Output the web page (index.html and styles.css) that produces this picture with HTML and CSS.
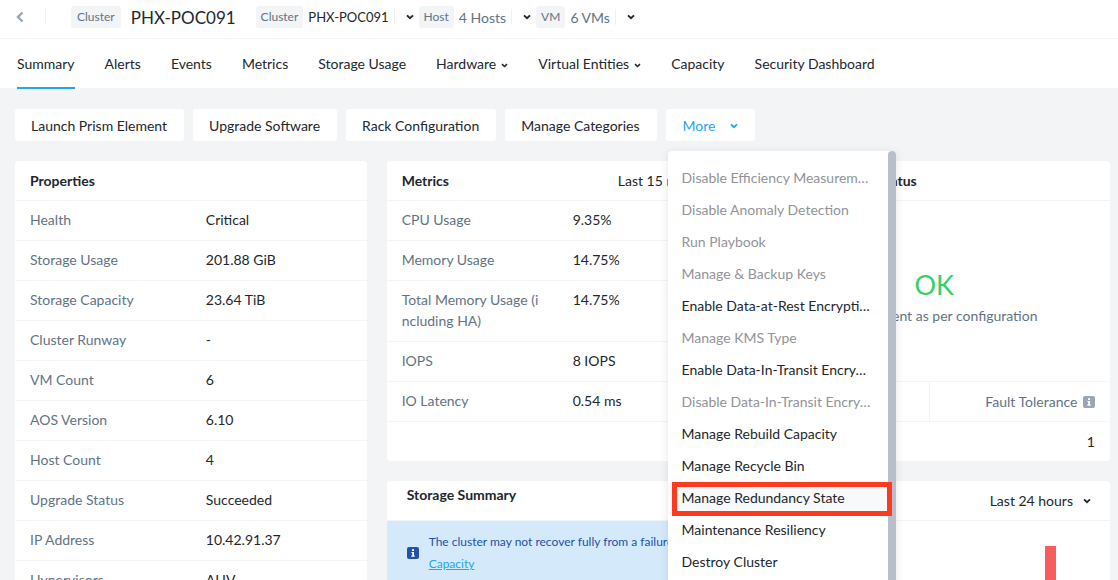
FILE: index.html
```html
<!DOCTYPE html>
<html lang="en">
<head>
<meta charset="utf-8">
<title>PHX-POC091 - Summary</title>
<link rel="stylesheet" href="styles.css">
</head>
<body>
<svg class="sprite" aria-hidden="true">
  <symbol id="caret" viewBox="0 0 8 6"><path d="M1 1.4 4 4.2 7 1.4" fill="none" stroke="currentColor" stroke-width="1.9"/></symbol>
  <symbol id="info" viewBox="0 0 12 12"><rect width="12" height="12" rx="2" fill="currentColor"/><path d="M5 2.2h2v1.7H5zM4.4 4.9H7v3.7h.7v1.1H4.3V8.600h.9V6h-.8z" fill="#fff"/></symbol>
</svg>

<header class="topbar">
  <button class="back" aria-label="Back"><svg width="8" height="12" viewBox="0 0 8 12"><path d="M6.500 1.500 2 6l4.500 4.500" fill="none" stroke="currentColor" stroke-width="2.400"/></svg></button>
  <span class="rule"></span>
  <div class="current"><span class="chip chip-wide">Cluster</span><h1>PHX-POC091</h1></div>
  <div class="crumb"><span class="chip">Cluster</span><span class="name">PHX-POC091</span><span class="rule"></span><button class="open" aria-label="Clusters"><svg class="caret"><use href="#caret"/></svg></button></div>
  <div class="crumb muted"><span class="chip">Host</span><span class="name">4 Hosts</span><span class="rule"></span><button class="open" aria-label="Hosts"><svg class="caret"><use href="#caret"/></svg></button></div>
  <div class="crumb muted"><span class="chip">VM</span><span class="name">6 VMs</span><span class="rule"></span><button class="open" aria-label="VMs"><svg class="caret"><use href="#caret"/></svg></button></div>
</header>

<nav class="tabs">
  <a class="tab active" href="#">Summary</a>
  <a class="tab" href="#">Alerts</a>
  <a class="tab" href="#">Events</a>
  <a class="tab" href="#">Metrics</a>
  <a class="tab" href="#">Storage Usage</a>
  <a class="tab" href="#">Hardware <svg class="caret small"><use href="#caret"/></svg></a>
  <a class="tab" href="#">Virtual Entities <svg class="caret small"><use href="#caret"/></svg></a>
  <a class="tab" href="#">Capacity</a>
  <a class="tab" href="#">Security Dashboard</a>
</nav>

<main class="content">
  <div class="actions">
    <button class="action">Launch Prism Element</button>
    <button class="action">Upgrade Software</button>
    <button class="action">Rack Configuration</button>
    <button class="action">Manage Categories</button>
    <div class="more">
      <button class="action action-more" aria-expanded="true">More <svg class="caret"><use href="#caret"/></svg></button>
      <div class="menu">
        <div class="menu-items">
          <button class="item" disabled>Disable Efficiency Measurem…</button>
          <button class="item" disabled>Disable Anomaly Detection</button>
          <button class="item" disabled>Run Playbook</button>
          <button class="item" disabled>Manage &amp; Backup Keys</button>
          <button class="item">Enable Data-at-Rest Encrypti…</button>
          <button class="item" disabled>Manage KMS Type</button>
          <button class="item">Enable Data-In-Transit Encry…</button>
          <button class="item" disabled>Disable Data-In-Transit Encry…</button>
          <button class="item">Manage Rebuild Capacity</button>
          <button class="item">Manage Recycle Bin</button>
          <button class="item marked">Manage Redundancy State</button>
          <button class="item">Maintenance Resiliency</button>
          <button class="item">Destroy Cluster</button>
        </div>
        <div class="menu-scroll"></div>
      </div>
    </div>
  </div>

  <div class="cards">
    <section class="card tall">
      <div class="card-head"><h2>Properties</h2></div>
      <table class="facts">
        <tr><th scope="row">Health</th><td>Critical</td></tr>
        <tr><th scope="row">Storage Usage</th><td>201.88 GiB</td></tr>
        <tr><th scope="row">Storage Capacity</th><td>23.64 TiB</td></tr>
        <tr><th scope="row">Cluster Runway</th><td>-</td></tr>
        <tr><th scope="row">VM Count</th><td>6</td></tr>
        <tr><th scope="row">AOS Version</th><td>6.10</td></tr>
        <tr><th scope="row">Host Count</th><td>4</td></tr>
        <tr><th scope="row">Upgrade Status</th><td>Succeeded</td></tr>
        <tr><th scope="row">IP Address</th><td>10.42.91.37</td></tr>
        <tr><th scope="row">Hypervisors</th><td>AHV</td></tr>
      </table>
    </section>

    <section class="card">
      <div class="card-head metrics-head"><h2>Metrics</h2><button class="range">Last 15 minutes</button></div>
      <table class="facts metrics">
        <tr><th scope="row">CPU Usage</th><td>9.35%</td></tr>
        <tr><th scope="row">Memory Usage</th><td>14.75%</td></tr>
        <tr><th scope="row">Total Memory Usage (including HA)</th><td>14.75%</td></tr>
        <tr><th scope="row">IOPS</th><td>8 IOPS</td></tr>
        <tr><th scope="row">IO Latency</th><td>0.54 ms</td></tr>
      </table>
    </section>

    <section class="card resiliency">
      <div class="card-head resiliency-head"><h2>Data Resiliency Status</h2></div>
      <div class="status"><div class="ok">OK</div><div class="note">Data resilient as per configuration</div></div>
      <table class="tolerance">
        <tr><th>Domain</th><th>Fault Tolerance <svg class="info"><use href="#info"/></svg></th></tr>
        <tr><td>Host</td><td>1</td></tr>
      </table>
    </section>

    <section class="card">
      <div class="card-head storage-head"><h2>Storage Summary</h2></div>
      <div class="notice">
        <svg class="info"><use href="#info"/></svg>
        <div class="notice-text">The cluster may not recover fully from a failure.<br><a href="#">Capacity</a></div>
      </div>
    </section>

    <section class="card">
      <div class="card-head alerts-head"><h2>Alerts</h2><button class="range">Last 24 hours <svg class="caret"><use href="#caret"/></svg></button></div>
      <div class="chart"><div class="bar"></div></div>
    </section>
  </div>
</main>
</body>
</html>
```
FILE: styles.css
```css
* { box-sizing: border-box; }
body {
  margin: 0;
  height: 100vh;
  overflow: hidden;
  background: #f2f4f6;
  color: #22272e;
  font: 14px/21px Lato, "Open Sans", sans-serif;
}
button {
  border: 0;
  padding: 0;
  background: none;
  color: inherit;
  font: inherit;
}
h1, h2 { margin: 0; }
.sprite { position: absolute; width: 0; height: 0; }
.caret { width: 8px; height: 6px; flex: none; }
.caret.small { width: 7px; height: 5px; margin: 3px 0 0 5px; }
.info { width: 12px; height: 12px; flex: none; }

.topbar {
  display: flex;
  align-items: center;
  height: 39px;
  padding: 0 16px 4px;
  background: #fff;
  border-bottom: 1px solid #f2f4f6;
}
.back { display: flex; width: 29px; color: #9aa5b5; }
.rule { width: 1px; height: 16px; background: #eef0f3; }
.current { display: flex; align-items: center; gap: 10px; margin: 0 20px 0 25px; }
h1 { font-size: 17px; font-weight: 400; }
.chip {
  padding: 0 5px;
  border-radius: 3px;
  background: #f2f4f6;
  color: #627386;
  font-size: 12px;
  line-height: 22px;
}
.chip-wide { padding: 0 6px; }
.crumb { display: flex; align-items: center; gap: 5px; margin-right: 5px; }
.name { font-size: 13px; }
.muted .name { color: #627386; font-size: 14px; }
.open { display: flex; margin-left: 6px; }

.tabs { display: flex; gap: 30px; height: 49px; padding: 0 17px; background: #fff; }
.tab {
  display: flex;
  align-items: center;
  height: 50px;
  padding-top: 1px;
  border-bottom: 2px solid transparent;
  color: inherit;
  text-decoration: none;
}
.active { border-color: #22a5f7; }

.content { padding: 21px 8px 0 15px; }
.actions { display: flex; gap: 9px; margin-bottom: 20px; }
.action {
  height: 32px;
  padding: 1px 17px 0 16px;
  border-radius: 3px;
  background: #fff;
}
.action-more {
  display: flex;
  align-items: center;
  gap: 15px;
  padding-left: 17px;
  color: #22a5f7;
}
.more { position: relative; }
.menu {
  position: absolute;
  z-index: 1;
  top: 42px;
  left: 2px;
  display: flex;
  width: 228px;
  border-radius: 4px;
  background: #fff;
  box-shadow: 0 2px 8px rgba(34, 39, 46, 0.12);
}
.menu-items { flex: 1; padding: 12px 0; }
.menu-scroll { width: 8px; border-radius: 4px; background: #b8bfca; }
.item {
  display: block;
  width: 100%;
  height: 32px;
  padding: 0 14px 3px;
  text-align: left;
  white-space: nowrap;
}
.item:disabled { color: #919499; }
.marked { position: relative; background: #f8f9fb; }
.marked::after {
  content: "";
  position: absolute;
  inset: -1px -4px -1px 4px;
  border: 5px solid #fc3a20;
}

.cards {
  display: grid;
  grid-template-columns: repeat(3, 1fr);
  grid-template-rows: 300px auto;
  gap: 20px;
}
.card { border-radius: 4px; background: #fff; overflow: hidden; }
.tall { grid-row: span 2; }
.card-head {
  display: flex;
  align-items: center;
  justify-content: space-between;
  height: 40px;
  padding: 0 15px;
  border-bottom: 1px solid #f2f4f6;
}
h2 { font-size: 14px; font-weight: 700; }
.range { display: flex; align-items: center; gap: 10px; }
.metrics-head { padding-right: 23px; }
.resiliency-head { padding-left: 21px; }
.storage-head { padding: 0 20px 12px; }
.alerts-head { padding-right: 19px; }

.facts { width: 100%; border-collapse: collapse; table-layout: fixed; }
.facts th, .facts td {
  padding: 8px 15px 10px;
  border-bottom: 1px solid #f2f4f6;
  font-weight: 400;
  text-align: left;
  vertical-align: top;
}
.facts th { width: 50%; color: #627386; word-break: break-all; }
.metrics th { width: 171px; }

.resiliency { display: flex; flex-direction: column; }
.status { flex: 1; text-align: center; padding-top: 63px; }
.ok { color: #36d068; font-size: 27px; line-height: 41px; }
.note { color: #627386; }
.tolerance { width: 100%; border-collapse: collapse; table-layout: fixed; }
.tolerance th, .tolerance td {
  height: 40px;
  padding: 0 15px;
  border-top: 1px solid #f2f4f6;
  font-weight: 400;
  text-align: left;
}
.tolerance th { color: #627386; }
.tolerance .info { color: #9aa5b5; margin-left: 2px; vertical-align: -1px; }
.tolerance th:last-child, .tolerance td:last-child { width: 180px; text-align: right; }
.tolerance th:last-child { border-left: 1px solid #f2f4f6; }

.notice {
  display: flex;
  align-items: center;
  gap: 10px;
  padding: 10px 20px;
  background: #d4eafb;
  color: #2350a9;
  font-size: 12px;
  line-height: 22px;
  white-space: nowrap;
}
.notice a { color: #22a5f7; }
.chart { display: flex; align-items: flex-end; height: 120px; padding: 0 54px 0 15px; }
.bar { width: 11px; height: 95px; margin-left: auto; background: #f75d5d; }
```
